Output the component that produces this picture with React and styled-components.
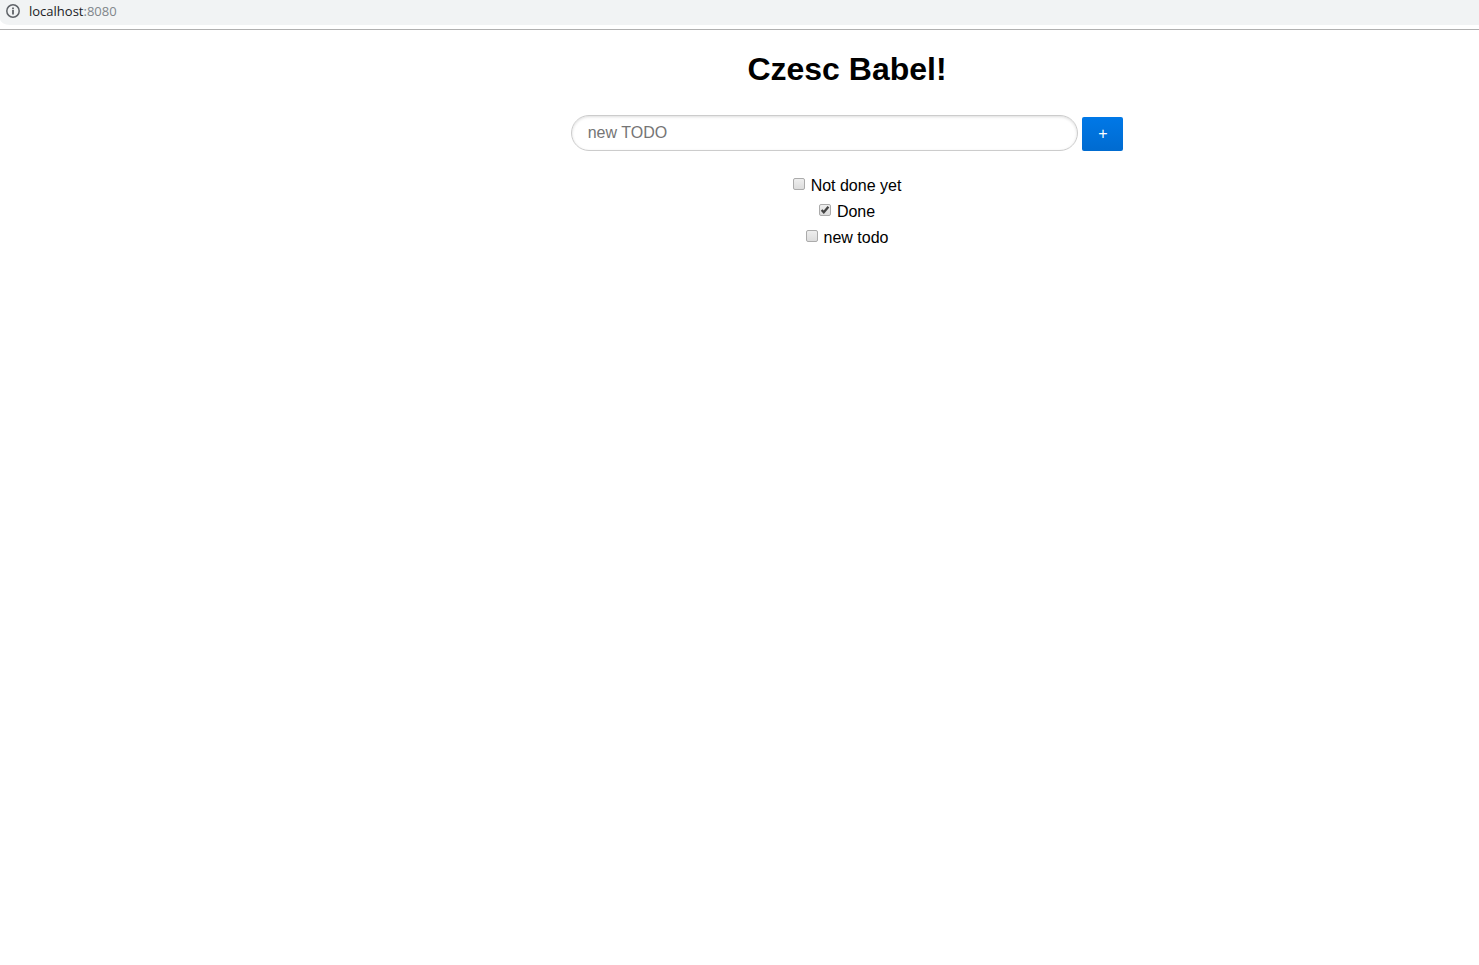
import React, { useState } from "react";
import styled, { createGlobalStyle } from "styled-components";

const GlobalStyle = createGlobalStyle`
  * { box-sizing: border-box; }
  body {
    margin: 0;
    background: #fff;
    color: #000;
    font-family: "Liberation Sans", Arial, sans-serif;
    font-size: 16px;
  }
`;

const AddressFrame = styled.header`
  height: 30px;
  border-bottom: 1px solid #b0b0b0;
`;

const AddressBar = styled.div`
  display: flex;
  align-items: center;
  gap: 8px;
  height: 25px;
  padding: 0 5px 3px;
  background: #f1f3f4;
  border-bottom-left-radius: 10px 6px;
  font-family: "Open Sans", "Noto Sans", sans-serif;
  font-size: 13px;
  line-height: 20px;
  color: #202124;
`;

const InfoIcon = styled.svg`
  flex: none;
  width: 16px;
  height: 16px;
`;

const Port = styled.span`
  color: #80868b;
`;

const Page = styled.main`
  padding: 20px 0 0 215px;
  text-align: center;
`;

const Title = styled.h1`
  margin: 0;
  font-size: 32px;
  line-height: 38px;
`;

const TodoForm = styled.form`
  display: flex;
  justify-content: center;
  align-items: flex-end;
  gap: 4px;
  margin-top: 27px;
`;

const TodoInput = styled.input`
  width: calc(40% + 2px);
  height: 36px;
  padding: 0 16px;
  border: 1px solid #ccc;
  border-radius: 18px;
  background: #fff;
  box-shadow: inset 0 1px 3px #ddd;
  font: inherit;
  &::placeholder { color: #757575; opacity: 1; }
`;

const AddButton = styled.button`
  width: 41px;
  height: 34px;
  padding: 0;
  border: 0;
  border-radius: 2px;
  background: linear-gradient(#0078e7, #006bd0);
  color: #fff;
  font: 16px/34px "Liberation Sans", Arial, sans-serif;
`;

const TodoList = styled.ul`
  margin: 22px 0 0;
  padding: 0;
  list-style: none;
`;

const TodoItem = styled.li`
  display: flex;
  justify-content: center;
  height: 26px;
`;

const TodoLabel = styled.label`
  display: flex;
  align-items: center;
  gap: 6px;
  line-height: 26px;
`;

const CheckFrame = styled.span`
  display: grid;
  margin-bottom: 4px;
  > * { grid-area: 1 / 1; }
`;

const Checkbox = styled.input`
  appearance: none;
  width: 12px;
  height: 12px;
  margin: 0;
  border: 1px solid #ababab;
  border-radius: 2px;
  background: linear-gradient(#eee, #dcdcdc);
`;

const Tick = styled.svg`
  width: 12px;
  height: 12px;
  pointer-events: none;
`;

const initialTodos = [
  { id: 1, text: "Not done yet", done: false },
  { id: 2, text: "Done", done: true },
  { id: 3, text: "new todo", done: false },
];

export default function App() {
  const [todos, setTodos] = useState(initialTodos);
  const [draft, setDraft] = useState("");

  const addTodo = (event) => {
    event.preventDefault();
    if (!draft.trim()) return;
    setTodos([...todos, { id: todos.length + 1, text: draft, done: false }]);
    setDraft("");
  };

  const toggle = (id) =>
    setTodos(todos.map((t) => (t.id === id ? { ...t, done: !t.done } : t)));

  return (
    <>
      <GlobalStyle />
      <AddressFrame>
        <AddressBar>
          <InfoIcon viewBox="0 0 16 16" aria-hidden="true">
            <circle cx="8" cy="8" r="6.2" fill="none" stroke="#5f6368" strokeWidth="1.5" />
            <path d="M7.1 4.4h1.8v1.8H7.1zM7.1 7.1h1.8v4.5H7.1z" fill="#5f6368" />
          </InfoIcon>
          <span>localhost<Port>:8080</Port></span>
        </AddressBar>
      </AddressFrame>
      <Page>
        <Title>Czesc Babel!</Title>
        <TodoForm onSubmit={addTodo}>
          <TodoInput
            type="text"
            aria-label="new TODO"
            placeholder="new TODO"
            value={draft}
            onChange={(event) => setDraft(event.target.value)}
          />
          <AddButton type="submit">+</AddButton>
        </TodoForm>
        <TodoList>
          {todos.map((todo) => (
            <TodoItem key={todo.id}>
              <TodoLabel>
                <CheckFrame>
                  <Checkbox type="checkbox" checked={todo.done} onChange={() => toggle(todo.id)} />
                  {todo.done && (
                    <Tick viewBox="0 0 12 12" aria-hidden="true">
                      <path d="M2.6 6L4.8 8.3L9.4 2.8" fill="none" stroke="#444" strokeWidth="2.3" />
                    </Tick>
                  )}
                </CheckFrame>
                {todo.text}
              </TodoLabel>
            </TodoItem>
          ))}
        </TodoList>
      </Page>
    </>
  );
}
